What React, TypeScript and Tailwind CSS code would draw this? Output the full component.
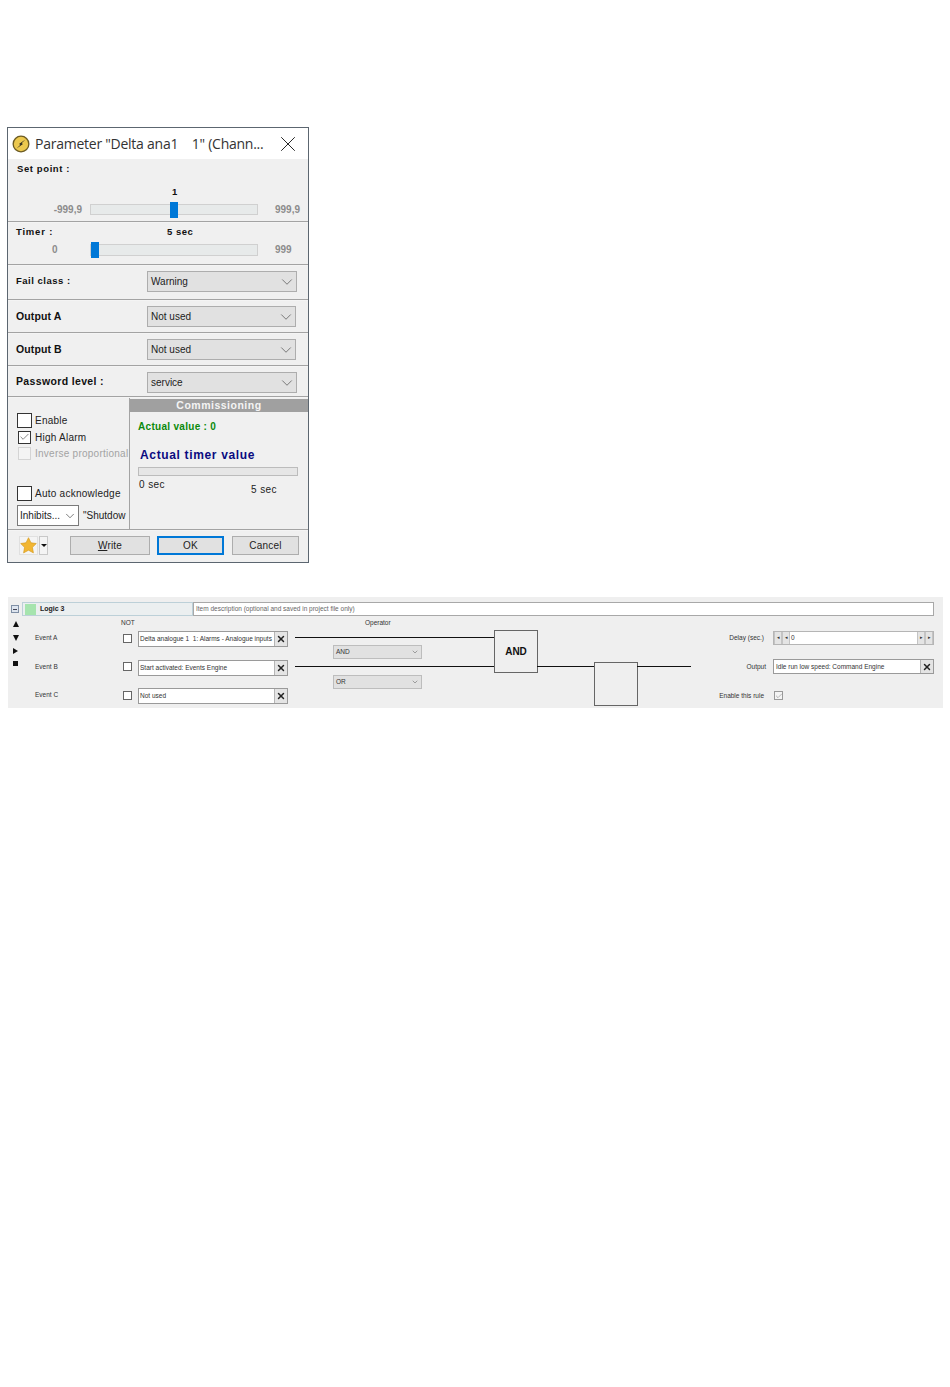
import React from 'react';
import { ChevronDown, X, Check } from 'lucide-react';

const Divider = () => <div className="h-[2px] bg-[#a3a3a3] border-b border-[#f4f4f4] shrink-0" />;

const Slider = ({ min, max, minClass, thumbClass, h }: { min: string; max: string; minClass: string; thumbClass: string; h: string }) => (
  <div className="flex items-center">
    <span className={`text-[10px] text-[#8c8c8c] font-bold ${minClass}`}>{min}</span>
    <div className={`relative w-[168px] ${h} bg-[#e7eaea] border border-[#d0d0d0]`}>
      <div className={`absolute w-[8px] h-[16px] bg-[#0078d7] ${thumbClass}`} />
    </div>
    <span className="ml-[17px] text-[10px] text-[#8c8c8c] font-bold">{max}</span>
  </div>
);

const SelectRow = ({ label, value, h, labelClass, width }: { label: string; value: string; h: string; labelClass: string; width: string }) => (
  <div className={`flex items-center justify-between pl-[8px] ${h}`}>
    <span className={`font-bold text-[#111] ${labelClass}`}>{label}</span>
    <div className={`flex items-center justify-between h-[21px] ${width} bg-[#e1e1e1] border border-[#adadad] pl-[3px] text-[10px] text-[#222]`}>
      <span>{value}</span>
      <ChevronDown size={18} strokeWidth={0.8} className="text-[#333]" />
    </div>
  </div>
);

const CheckRow = ({ label, checked, disabled, small }: { label: string; checked?: boolean; disabled?: boolean; small?: boolean }) => (
  <div className="flex items-center gap-[3px] h-[16px]">
    <div className={`flex items-center justify-center ${small ? 'w-[13px] h-[13px] ml-[2px] mr-[1px]' : 'w-[15px] h-[15px] ml-[1px]'} border ${disabled ? 'border-[#d4d4d4] bg-[#f4f4f4]' : 'border-[#333] bg-white'}`}>
      {checked && <Check size={12} strokeWidth={1.2} className="text-[#222]" />}
    </div>
    <span className={`text-[10px] tracking-[0.25px] whitespace-nowrap ${disabled ? 'text-[#a3a3a3]' : 'text-[#222]'}`}>{label}</span>
  </div>
);

const Btn = ({ children, w, primary }: { children: React.ReactNode; w: string; primary?: boolean }) => (
  <div className={`flex items-center justify-center h-[19px] ${w} text-[10px] tracking-[0.2px] text-[#222] bg-[#e1e1e1] ${primary ? 'border-2 border-[#0078d7]' : 'border border-[#adadad]'}`}>
    {children}
  </div>
);

const Dialog = () => (
  <div className="w-[302px] h-[436px] border border-[#5c6670] bg-[#f0f0f0] flex flex-col overflow-hidden font-['Liberation_Sans',sans-serif]">
    <div className="h-[31px] bg-white flex items-center pl-[4px] pr-[7px] shrink-0">
      <svg width="18" height="18" viewBox="0 0 18 18">
        <circle cx="9" cy="9" r="8.5" fill="#6b5a22" />
        <circle cx="9" cy="9" r="7.2" fill="#ecc84e" />
        <path d="M13.5 4.5 L9.6 8.2 L11 9 L4.5 13.5 L8.4 9.8 L7 9 Z" fill="#2d2a20" />
      </svg>
      <span className="ml-[5px] text-[14px] text-[#333] font-['Open_Sans',sans-serif] whitespace-pre tracking-[-0.25px]">Parameter "Delta ana1    1" (Chann...</span>
      <X size={26} strokeWidth={0.9} className="ml-auto text-[#222]" />
    </div>

    <div className="h-[62px] flex flex-col shrink-0">
      <div className="pl-[9px] pt-[4px] text-[9.5px] font-bold tracking-[0.6px] text-[#111] leading-[12px]">Set point :</div>
      <div className="pl-[164px] pt-[11px] text-[9.5px] font-bold text-[#111] leading-[12px]">1</div>
      <div className="pt-[4px]">
        <Slider min="-999,9" max="999,9" minClass="w-[74px] mr-[8px] text-right" thumbClass="left-[79px] top-[-3px]" h="h-[11px]" />
      </div>
    </div>
    <Divider />

    <div className="h-[41px] flex flex-col shrink-0">
      <div className="flex pt-[3px] leading-[12px] text-[9.5px] font-bold text-[#111]">
        <span className="pl-[8px] w-[159px] tracking-[0.8px]">Timer :</span>
        <span className="tracking-[0.5px]">5 sec</span>
      </div>
      <div className="pt-[4px]">
        <Slider min="0" max="999" minClass="w-[82px] pl-[44px]" thumbClass="left-0 top-[-3px]" h="h-[12px]" />
      </div>
    </div>
    <Divider />

    <SelectRow label="Fail class :" value="Warning" h="h-[33px] pb-[2px] shrink-0" labelClass="text-[9.5px] tracking-[0.5px]" width="w-[150px] mr-[11px]" />
    <Divider />
    <SelectRow label="Output A" value="Not used" h="h-[31px] shrink-0" labelClass="text-[10.5px] tracking-[0.1px]" width="w-[149px] mr-[12px]" />
    <Divider />
    <SelectRow label="Output B" value="Not used" h="h-[31px] shrink-0" labelClass="text-[10.5px] tracking-[0.1px]" width="w-[149px] mr-[12px]" />
    <Divider />
    <SelectRow label="Password level :" value="service" h="h-[29px] shrink-0" labelClass="text-[10.5px] tracking-[0.35px]" width="w-[150px] mr-[11px] mt-[2px]" />
    <Divider />

    <div className="flex h-[131px] shrink-0">
      <div className="w-[121px] pl-[8px] pt-[14px] flex flex-col overflow-hidden shrink-0">
        <CheckRow label="Enable" />
        <div className="h-[1px]" />
        <CheckRow label="High Alarm" checked small />
        <CheckRow label="Inverse proportional" disabled small />
        <div className="h-[24px]" />
        <CheckRow label="Auto acknowledge" />
        <div className="flex items-center mt-[4px] ml-[1px]">
          <div className="flex items-center justify-between w-[62px] h-[21px] border border-[#7a7a7a] bg-white pl-[2px] pr-[1px] text-[10px] text-[#222] shrink-0">
            <span>Inhibits...</span>
            <ChevronDown size={14} strokeWidth={1} />
          </div>
          <span className="ml-[4px] text-[10px] text-[#222] whitespace-nowrap">"Shutdow</span>
        </div>
      </div>
      <div className="flex-1 border-l border-[#a3a3a3] flex flex-col relative bg-[#f0f0f0]">
        <div className="mt-[1px] h-[13px] bg-[#a0a0a0] text-[#f4f4f4] text-[10.5px] font-bold tracking-[0.5px] text-center leading-[13px]">Commissioning</div>
        <div className="pl-[8px] pt-[9px] text-[10px] font-bold text-[#0b8a0b] leading-[12px] tracking-[0.3px]">Actual value : 0</div>
        <div className="pl-[10px] pt-[15px] text-[12px] font-bold text-[#0a0a80] leading-[14px] tracking-[0.65px]">Actual timer value</div>
        <div className="ml-[8px] mt-[5px] w-[160px] h-[9px] bg-[#e6e6e6] border border-[#bcbcbc]" />
        <div className="flex pl-[9px] text-[10px] tracking-[0.4px] text-[#222] leading-[12px] pt-[3px]">
          <span className="w-[112px]">0 sec</span>
          <span className="pt-[5px]">5 sec</span>
        </div>
      </div>
    </div>
    <Divider />

    <div className="flex-1 flex items-center pl-[11px] pb-[2px]">
      <div className="w-[19px] h-[19px] flex items-center justify-center bg-[#f4f4f4] border border-[#e0e0e0]">
        <svg width="17" height="17" viewBox="0 0 24 24">
          <path d="M12 1 L15.4 8.2 L23 9.2 L17.5 14.6 L18.9 22.4 L12 18.6 L5.1 22.4 L6.5 14.6 L1 9.2 L8.6 8.2 Z" fill="#f2b632" stroke="#d69a1e" strokeWidth="1" />
        </svg>
      </div>
      <div className="ml-[1px] w-[9px] h-[19px] flex items-center justify-center bg-[#f4f4f4] border border-[#c8c8c8]">
        <div className="w-0 h-0 border-x-[3px] border-x-transparent border-t-[3px] border-t-[#111]" />
      </div>
      <div className="w-[22px]" />
      <Btn w="w-[80px]"><span><span className="underline">W</span>rite</span></Btn>
      <div className="w-[7px]" />
      <Btn w="w-[67px]" primary>OK</Btn>
      <div className="w-[8px]" />
      <Btn w="w-[67px]">Cancel</Btn>
    </div>
  </div>
);

const ClearBtn = () => (
  <div className="w-[13px] h-full flex items-center justify-center bg-[#e4e4e4] border-l border-[#b5b5b5] shrink-0">
    <X size={10} strokeWidth={3.5} className="text-[#222]" />
  </div>
);

const EventRow = ({ label, value }: { label: string; value: string }) => (
  <div className="flex items-center h-[16px]">
    <span className="w-[101px] pl-[13px] text-[6.5px] text-[#333] -mt-[2px]">{label}</span>
    <div className="w-[9px] h-[9px] bg-white border border-[#666] -mt-[2px]" />
    <div className="ml-[6px] w-[150px] h-[16px] flex items-center justify-between bg-white border border-[#9a9a9a]">
      <span className="pl-[1px] text-[6.5px] text-[#333] whitespace-pre">{value}</span>
      <ClearBtn />
    </div>
  </div>
);

const OperatorSelect = ({ value, top }: { value: string; top: string }) => (
  <div className={`absolute left-[45px] ${top} w-[89px] h-[14px] flex items-center justify-between bg-[#e1e1e1] border border-[#bdbdbd] px-[2px] text-[6.5px] text-[#333]`}>
    <span>{value}</span>
    <ChevronDown size={8} strokeWidth={1.2} />
  </div>
);

const Spin = ({ glyph }: { glyph: string }) => (
  <div className="w-[8px] h-full flex items-center justify-center bg-[#e4e4e4] border-x border-[#c4c4c4] text-[5px] text-[#333] shrink-0">{glyph}</div>
);

const LogicPanel = () => (
  <div className="ml-[1px] w-[935px] h-[111px] bg-[#efefef] flex flex-col font-['Liberation_Sans',sans-serif] overflow-hidden">
    <div className="flex items-center pt-[5px] h-[19px] shrink-0">
      <div className="ml-[3px] w-[8px] h-[8px] border border-[#7f8fa5] bg-[#dde4ee] flex items-center justify-center">
        <div className="w-[4px] h-px bg-[#445]" />
      </div>
      <div className="ml-[3px] w-[171px] h-[14px] flex items-center border border-[#bcd0d8] bg-[#ebeff0]">
        <div className="ml-[2px] w-[11px] h-[11px] bg-[#a6e4ae]" />
        <span className="ml-[4px] text-[7px] font-bold text-[#222]">Logic 3</span>
      </div>
      <div className="w-[741px] h-[14px] flex items-center bg-white border border-[#a8a8a8] pl-[2px] text-[6.5px] text-[#666]">
        Item description (optional and saved in project file only)
      </div>
    </div>

    <div className="flex-1 flex">
      <div className="w-[280px] shrink-0 flex">
        <div className="w-[14px] pl-[5px] pt-[5px] flex flex-col gap-[6px] shrink-0">
          <div className="w-0 h-0 border-x-[3px] border-x-transparent border-b-[6px] border-b-[#111]" />
          <div className="w-0 h-0 border-x-[3px] border-x-transparent border-t-[6px] border-t-[#111] mt-[2px]" />
          <div className="w-0 h-0 border-y-[3px] border-y-transparent border-l-[5px] border-l-[#111] mt-[1px]" />
          <div className="w-[5px] h-[5px] bg-[#111] mt-[1px]" />
        </div>
        <div className="flex-1 flex flex-col">
          <div className="h-[15px] pl-[99px] pt-[3px] text-[6.5px] text-[#333] leading-[8px]">NOT</div>
          <div className="flex flex-col gap-[12.5px]">
            <EventRow label="Event A" value="Delta analogue 1  1: Alarms - Analogue inputs" />
            <EventRow label="Event B" value="Start activated: Events Engine" />
            <EventRow label="Event C" value="Not used" />
          </div>
        </div>
      </div>

      <div className="relative w-[415px] shrink-0">
        <span className="absolute left-[77px] top-[3px] text-[6.5px] text-[#333] leading-[8px]">Operator</span>
        <div className="absolute left-[7px] top-[21px] w-[200px] h-px bg-[#111]" />
        <div className="absolute left-[7px] top-[50px] w-[200px] h-px bg-[#111]" />
        <OperatorSelect value="AND" top="top-[29px]" />
        <OperatorSelect value="OR" top="top-[59px]" />
        <div className="absolute left-[206px] top-[14px] w-[44px] h-[43px] flex items-center justify-center border border-[#666] bg-[#efefef] text-[10px] font-bold text-[#111]">AND</div>
        <div className="absolute left-[249px] top-[50px] w-[58px] h-px bg-[#111]" />
        <div className="absolute left-[306px] top-[46px] w-[44px] h-[44px] border border-[#666] bg-[#efefef]" />
        <div className="absolute left-[349px] top-[50px] w-[54px] h-px bg-[#111]" />
      </div>

      <div className="flex-1 flex flex-col pt-[15px]">
        <div className="flex items-center h-[14px]">
          <span className="w-[61px] text-right text-[6.5px] text-[#333]">Delay (sec.)</span>
          <div className="ml-[9px] w-[161px] h-[14px] flex items-center bg-white border border-[#b5b5b5]">
            <Spin glyph="◂" /><Spin glyph="◂" />
            <span className="pl-[1px] text-[6.5px] text-[#333] flex-1">0</span>
            <Spin glyph="▸" /><Spin glyph="▸" />
          </div>
        </div>
        <div className="flex items-center h-[15px] mt-[14px]">
          <span className="w-[63px] text-right text-[6.5px] text-[#333]">Output</span>
          <div className="ml-[7px] w-[161px] h-[15px] flex items-center justify-between bg-white border border-[#9a9a9a]">
            <span className="pl-[2px] text-[6.5px] text-[#333]">Idle run low speed: Command Engine</span>
            <ClearBtn />
          </div>
        </div>
        <div className="flex items-center h-[9px] mt-[17px]">
          <span className="w-[61px] text-right text-[6.5px] text-[#333]">Enable this rule</span>
          <div className="ml-[10px] w-[9px] h-[9px] border border-[#9a9a9a] bg-[#f4f4f4] flex items-center justify-center">
            <Check size={8} strokeWidth={1.2} className="text-[#555] shrink-0" />
          </div>
        </div>
      </div>
    </div>
  </div>
);

export default function App() {
  return (
    <div className="min-h-[1387px] bg-white pt-[127px] pl-[7px]">
      <Dialog />
      <div className="h-[34px]" />
      <LogicPanel />
    </div>
  );
}
